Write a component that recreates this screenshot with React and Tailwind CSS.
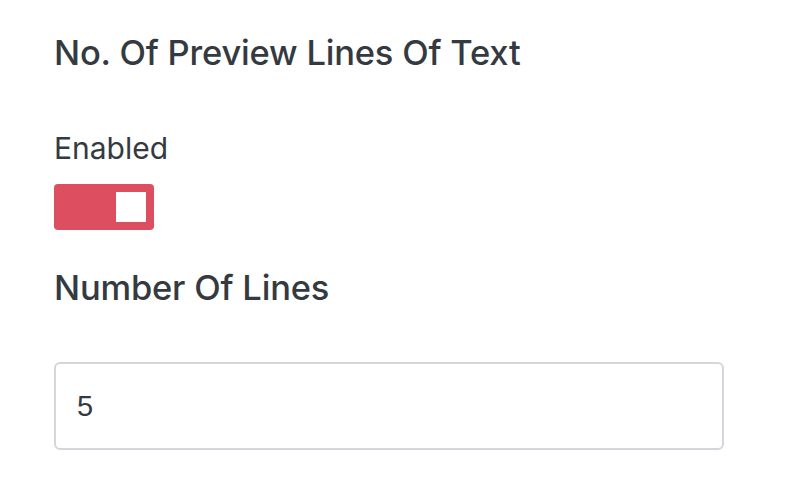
import { useState } from 'react';

const App = () => {
  const [enabled, setEnabled] = useState(true);
  const [lines, setLines] = useState('5');

  return (
    <div className="w-[790px] h-[492px] bg-white pl-[54px] pr-[66px] pt-[30px] text-[#343a40]" style={{ fontFamily: 'Inter, "Noto Sans", sans-serif' }}>
      <h2 className="text-[34.5px] leading-[46px] font-medium tracking-[-0.2px]">No. Of Preview Lines Of Text</h2>

      <div className="mt-[54px] text-[30px] leading-[36px]">Enabled</div>
      <button
        onClick={() => setEnabled(!enabled)}
        className={`mt-[18px] flex items-center w-[100px] h-[46px] rounded-[4px] px-[8px] ${enabled ? 'bg-[#dd4f60] justify-end' : 'bg-gray-300 justify-start'}`}
      >
        <span className="block w-[30px] h-[30px] bg-white" />
      </button>

      <h3 className="mt-[35px] text-[34.5px] leading-[46px] font-medium tracking-[-0.2px]">Number Of Lines</h3>

      <input
        type="text"
        value={lines}
        onChange={(e) => setLines(e.target.value)}
        className="mt-[51px] block w-full h-[88px] px-[21px] border-2 border-[#d3d7db] rounded-[6px] text-[29px] text-[#343a40] outline-none"
        style={{ fontFamily: '"Liberation Sans", Arial, sans-serif' }}
      />
    </div>
  );
};

export default App;
